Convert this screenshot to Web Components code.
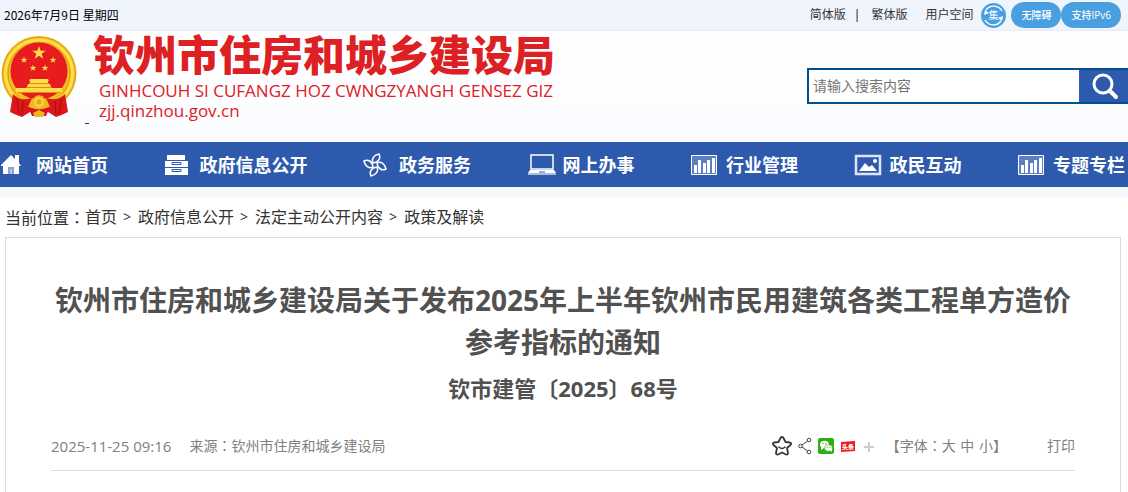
<!DOCTYPE html>
<html lang="zh-CN">
<head>
<meta charset="utf-8">
<title>钦州市住房和城乡建设局</title>
<style>
    body {
        margin: 0;
        min-height: 100vh;
        display: flex;
        flex-direction: column;
        background: #fff;
        color: #333;
        font-family: "Open Sans", "Noto Sans CJK SC", sans-serif;
    }
</style>
</head>
<body>
<top-bar></top-bar>
<site-header></site-header>
<main-nav>
    <nav-item icon="home">网站首页</nav-item>
    <nav-item icon="drawer">政府信息公开</nav-item>
    <nav-item icon="fan">政务服务</nav-item>
    <nav-item icon="laptop">网上办事</nav-item>
    <nav-item icon="chart">行业管理</nav-item>
    <nav-item icon="picture">政民互动</nav-item>
    <nav-item icon="chart">专题专栏</nav-item>
</main-nav>
<crumb-trail></crumb-trail>
<article-panel>
    <span slot="title">钦州市住房和城乡建设局关于发布2025年上半年钦州市民用建筑各类工程单方造价参考指标的通知</span>
    <span slot="number">钦市建管〔2025〕68号</span>
    <article-meta slot="meta"></article-meta>
</article-panel>

<script>
class BaseElement extends HTMLElement {
    connectedCallback() {
        if (this.shadowRoot) return;
        this.root = this.attachShadow({mode: 'open'});
        this.root.innerHTML = this.constructor.template(this);
    }
}

class TopBar extends BaseElement {
    static template() {
        return `
            <style>
                :host {
                    display: flex;
                    align-items: center;
                    justify-content: space-between;
                    height: 30px;
                    padding: 0 7px 0 4px;
                    background: #f0f5fd;
                    border-bottom: 1px solid #e3ecf8;
                    font-size: 12px;
                    line-height: 16px;
                }
                time {
                    font-family: "Noto Sans CJK SC", sans-serif;
                    color: #000;
                }
                nav, .pills { display: flex; align-items: center; }
                a { color: #333; text-decoration: none; }
                .bar { margin: 0 11px 0 8px; color: #000; }
                .space { margin: 0 8px 0 18px; }
                svg { display: block; width: 25px; height: 25px; }
                .pills { margin-left: 5px; }
                .pills a {
                    box-sizing: border-box;
                    height: 26px;
                    padding: 0 10px;
                    border-radius: 13px;
                    background: #4a9fe0;
                    color: #fff;
                    font-size: 10px;
                    font-weight: 500;
                    line-height: 26px;
                }
            </style>
            <time datetime="2026-07-09">2026年7月9日 星期四</time>
            <nav>
                <a href="#">简体版</a>
                <span class="bar">|</span>
                <a href="#">繁体版</a>
                <a class="space" href="#">用户空间</a>
                <a href="#" aria-label="集约化">
                    <svg viewBox="0 0 25 25">
                        <circle cx="12.500" cy="12.500" r="12.500" fill="#4a9fe0"/>
                        <path d="M5 7a9.500 9.500 0 0 1 16 1M20 18A9.500 9.500 0 0 1 4 17" fill="none" stroke="#fff" stroke-width="1.400"/>
                        <path d="M3 12l1-5 4 3zM22 13l-1 5-4-3z" fill="#fff"/>
                        <text x="12.500" y="16" text-anchor="middle" font-size="10" fill="#fff">集</text>
                    </svg>
                </a>
                <div class="pills">
                    <a href="#">无障碍</a>
                    <a href="#">支持IPv6</a>
                </div>
            </nav>
        `;
    }
}

class SiteEmblem extends BaseElement {
    static template() {
        return `
            <style>
                :host { display: block; width: 76px; height: 84px; }
                svg { display: block; }
            </style>
            <svg width="76" height="84" viewBox="0 0 76 84">
                <defs>
                    <path id="star" d="M0-7L1.700-2.200H6.700L2.700.800 4.200 5.700 0 2.800-4.200 5.700-2.700.800-6.700-2.200H-1.700z"/>
                </defs>
                <circle cx="38" cy="38.500" r="37.500" fill="#f2bd22"/>
                <circle cx="38" cy="38.500" r="36.500" fill="none" stroke="#dc9d18"/>
                <circle cx="38" cy="38.500" r="33.500" fill="none" stroke="#ffdf4a" stroke-width="3"/>
                <circle cx="38" cy="38.500" r="31" fill="none" stroke="#dd9b17"/>
                <circle cx="38" cy="36" r="28.500" fill="#e81c1f"/>
                <g fill="#ffdd4a">
                    <use href="#star" transform="translate(38 18)"/>
                    <use href="#star" transform="translate(23 25) scale(.5)"/>
                    <use href="#star" transform="translate(52 25) scale(.5)"/>
                    <use href="#star" transform="translate(32 33) scale(.5)"/>
                    <use href="#star" transform="translate(44 33) scale(.5)"/>
                    <path d="M29 44h18l1 2h-1v3h2l1 3h-24l1-3h2v-3h-1z"/>
                    <path d="M15 53h46v5h-46z"/>
                </g>
                <path d="M28 48.500h20M25 52.500h26M16 57.500h44" stroke="#dc8d14"/>
                <path d="M14 58l10 8h28l10-8-2 8-22 12-22-12z" fill="#f1b925"/>
                <path d="M12 59q7 8 19 4l-4 9 11 3 11-3-4-9q12 4 19-4l3 18q-6 3-12 5l-8-5-9-2-9 2-8 5q-6-2-12-5z" fill="#da171b"/>
                <circle cx="38" cy="67" r="6" fill="#f8d13b" stroke="#edb51f" stroke-width="2" stroke-dasharray="2 1"/>
                <circle cx="38" cy="67" r="2.500" fill="#e7a21c"/>
                <path d="M27 72q11 5 22 0l-4 9h-14z" fill="#d9151a"/>
                <path d="M32 78l6-3 6 3-2 4h-8z" fill="#f0b722"/>
                <path d="M16 64l2 15M22 66l-1 14M60 64l-2 15M54 66l1 14" stroke="#ad0c12"/>
            </svg>
        `;
    }
}

class SearchBox extends BaseElement {
    static template() {
        return `
            <style>
                :host { display: block; width: 321px; }
                form {
                    display: flex;
                    box-sizing: border-box;
                    height: 36px;
                    border: 2px solid #01508f;
                    border-right: 0;
                    background: #fff;
                }
                input {
                    flex: 1;
                    min-width: 0;
                    padding: 0 4px;
                    border: 0;
                    outline: 0;
                    font: 14px/20px "Open Sans", "Noto Sans CJK SC", sans-serif;
                }
                input::placeholder { color: #757575; }
                button {
                    width: 49px;
                    padding: 0 8px 0 12px;
                    border: 0;
                    background: #2e5aae;
                }
                svg { display: block; }
            </style>
            <form>
                <input type="text" aria-label="搜索" placeholder="请输入搜索内容">
                <button type="button" aria-label="搜索">
                    <svg width="29" height="28" viewBox="0 0 29 28" fill="none" stroke="#fff" stroke-linecap="round">
                        <circle cx="12" cy="12" r="9" stroke-width="3"/>
                        <path d="M19 19l6 6" stroke-width="4"/>
                    </svg>
                </button>
            </form>
        `;
    }
}

class SiteHeader extends BaseElement {
    static template() {
        return `
            <style>
                :host {
                    display: flex;
                    justify-content: space-between;
                    height: 111px;
                    background: linear-gradient(#fff, #fbfcff);
                }
                .brand { display: flex; color: #dc2024; }
                site-emblem { margin: 4px 8px 0 1px; }
                .mark {
                    align-self: flex-start;
                    width: 4px;
                    height: 92px;
                    margin-right: 4px;
                    border-bottom: 1px solid #333;
                }
                h1, p { margin: 0; white-space: nowrap; }
                h1 {
                    margin-bottom: 6px;
                    font: 900 42px/44px "Noto Sans CJK SC", sans-serif;
                }
                p {
                    padding-left: 6px;
                    font-size: 17px;
                    font-weight: 500;
                    line-height: 20px;
                }
                search-box { margin-top: 37px; }
            </style>
            <div class="brand">
                <site-emblem></site-emblem>
                <span class="mark"></span>
                <div>
                    <h1>钦州市住房和城乡建设局</h1>
                    <p>GINHCOUH SI CUFANGZ HOZ CWNGZYANGH GENSEZ GIZ</p>
                    <p>zjj.qinzhou.gov.cn</p>
                </div>
            </div>
            <search-box></search-box>
        `;
    }
}

class MainNav extends BaseElement {
    static template() {
        return `
            <style>
                :host { display: block; background: #2e5aae; border-bottom: 10px solid #f5f9fe; }
                nav {
                    display: flex;
                    align-items: center;
                    justify-content: space-between;
                    height: 45px;
                    padding-right: 3px;
                }
            </style>
            <nav><slot></slot></nav>
        `;
    }
}

const NAV_ICONS = {
    home: '<path d="M1 11L11 1l4 4V1h4v8l2 3h-2v8H3v-8H1z" fill="#fff"/><path d="M8 13h6v7H8z" fill="#8ba5d3"/><path d="M10 15h2v5h-2z" fill="#b9c9e5"/>',
    drawer: '<path d="M3 1h18v5H3zM1 7h23v6H1zM1 14h23v7H1z" fill="#fff"/><path d="M8 8.500h9v2H8zM8 15.500h9v2H8z" fill="none" stroke="#2e5aae" stroke-width="1"/>',
    fan: '<g fill="none" stroke="#fff" stroke-width="1.500"><path id="leaf" d="M10 9C8 5 11 1 16 0c2 4 0 8-6 9z"/><use href="#leaf" transform="rotate(90 12 11)"/><use href="#leaf" transform="rotate(180 12 11)"/><use href="#leaf" transform="rotate(270 12 11)"/></g>',
    laptop: '<path d="M4 1h22v14H4z" fill="none" stroke="#fff" stroke-width="1.500"/><path d="M3 16h24l2 3H1z" fill="#fff"/><path d="M1 19h28v2H1z" fill="#a9bddf"/><path d="M12 18h6" stroke="#2e5aae"/>',
    chart: '<path d="M1.500 1.500h25v19h-25z" fill="#5c7fc0" stroke="#fff"/><path d="M4 11h3v8H4zM8 6h3v13H8zM13 9h3v10h-3zM17 6h3v13h-3zM22 4h3v15h-3z" fill="#fff"/>',
    picture: '<path d="M2 2h24v18H2z" fill="none" stroke="#dce5f4" stroke-width="2.500"/><path d="M5 17l6-8 4 4 3-2 5 6z" fill="#fff"/><circle cx="21" cy="7" r="2" fill="#fff"/>'
};

class NavItem extends BaseElement {
    static template(el) {
        return `
            <style>
                :host { display: block; }
                a {
                    display: grid;
                    grid-template-columns: 36px auto;
                    align-items: center;
                    color: #fff;
                    font-size: 18px;
                    font-weight: 700;
                    line-height: 24px;
                    text-decoration: none;
                    white-space: nowrap;
                }
                svg { display: block; overflow: visible; }
            </style>
            <a href="#">
                <svg width="30" height="22" viewBox="0 0 30 22">${NAV_ICONS[el.getAttribute('icon')]}</svg>
                <span><slot></slot></span>
            </a>
        `;
    }
}

class CrumbTrail extends BaseElement {
    static template() {
        return `
            <style>
                :host {
                    display: flex;
                    height: 40px;
                    padding-left: 5px;
                    font-size: 16px;
                    line-height: 40px;
                }
                a { color: #333; text-decoration: none; }
                .colon { font-family: "Noto Sans CJK TC", sans-serif; }
                i { margin: 0 7px 0 6px; font-size: 14px; font-style: normal; }
            </style>
            <span>当前位置<span class="colon" lang="zh-TW">：</span></span>
            <a href="#">首页</a><i>&gt;</i>
            <a href="#">政府信息公开</a><i>&gt;</i>
            <a href="#">法定主动公开内容</a><i>&gt;</i>
            <a href="#">政策及解读</a>
        `;
    }
}

class ArticlePanel extends BaseElement {
    static template() {
        return `
            <style>
                :host {
                    display: block;
                    flex: 1;
                    margin: 0 7px 0 5px;
                    padding: 41px 45px 0;
                    border: 1px solid #dcdcdc;
                    border-bottom: 0;
                    color: #505150;
                    text-align: center;
                }
                h2, h3 { margin: 0; font-weight: 700; line-height: 42px; }
                h2 { font-size: 28px; }
                h3 { margin: 4px 0 24px; font-size: 22px; }
            </style>
            <h2><slot name="title"></slot></h2>
            <h3><slot name="number"></slot></h3>
            <slot name="meta"></slot>
        `;
    }
}

class ArticleMeta extends BaseElement {
    static template() {
        return `
            <style>
                :host {
                    display: flex;
                    align-items: center;
                    justify-content: space-between;
                    padding-bottom: 12px;
                    border-bottom: 1px solid #dcdcdc;
                    color: #808080;
                    font-size: 14px;
                    line-height: 24px;
                }
                div { display: flex; align-items: center; }
                time { margin-right: 18px; font-size: 15px; }
                a { color: inherit; text-decoration: none; }
                svg { display: block; }
                .colon { font-family: "Noto Sans CJK TC", sans-serif; }
                .share { gap: 6px; margin-right: 11px; }
                .size a + a { margin-left: 1px; }
                .print { margin-left: 40px; }
            </style>
            <div>
                <time datetime="2025-11-25T09:16">2025-11-25 09:16</time>
                <span>来源<span class="colon" lang="zh-TW">：</span>钦州市住房和城乡建设局</span>
            </div>
            <div>
                <div class="share">
                    <a href="#" aria-label="收藏">
                        <svg width="20" height="20" viewBox="0 0 20 20" fill="none" stroke="#333740" stroke-width="1.800" stroke-linejoin="round" stroke-linecap="round">
                            <path d="M8.500 2q1.500-2 3 0l2 4 4.500.500q2 .500.500 2.500l-3.500 3 1 5q0 2-2 1.500l-4-2-4 2q-2 .500-2-1.500l1-5-3.500-3q-1.500-2 .500-2.500l4.500-.500z"/>
                            <path d="M7 11q3 3 6 0" stroke-width="1.500"/>
                        </svg>
                    </a>
                    <a href="#" aria-label="分享">
                        <svg width="14" height="18" viewBox="0 0 14 18" fill="none" stroke="#444">
                            <circle cx="2.500" cy="9" r="1.800"/><circle cx="11" cy="3" r="1.800"/><circle cx="11" cy="15" r="1.800"/>
                            <path d="M4 8l5.500-4M4 10l5.500 4"/>
                        </svg>
                    </a>
                    <a href="#" aria-label="微信">
                        <svg width="16" height="16" viewBox="0 0 16 16">
                            <rect width="16" height="16" rx="2" fill="#2fae0f"/>
                            <ellipse cx="6.500" cy="6.500" rx="4.500" ry="3.800" fill="#fff"/><path d="M3 8v4l3-2z" fill="#fff"/>
                            <ellipse cx="10.500" cy="10" rx="4" ry="3.300" fill="#fff" stroke="#2fae0f" stroke-width=".6"/>
                            <path d="M12 12l2 2v-3z" fill="#fff"/>
                            <g fill="#2fae0f"><circle cx="5" cy="5.500" r=".7"/><circle cx="8" cy="5.500" r=".7"/><circle cx="9.200" cy="9.500" r=".6"/><circle cx="12" cy="9.500" r=".6"/></g>
                        </svg>
                    </a>
                    <a href="#" aria-label="今日头条">
                        <svg width="16" height="16" viewBox="0 0 16 16">
                            <path d="M1 4l14-1v10l-14 1z" fill="#ed1c1c"/>
                            <text x="8" y="11" text-anchor="middle" font-size="6" font-weight="900" fill="#fff">头条</text>
                        </svg>
                    </a>
                    <a href="#" aria-label="更多">
                        <svg width="13" height="16" viewBox="0 0 13 16"><path d="M2 9h10M7 4v10" stroke="#ccc" stroke-width="2"/></svg>
                    </a>
                </div>
                <span class="size">【字体<span class="colon" lang="zh-TW">：</span><a href="#">大</a> <a href="#">中</a> <a href="#">小</a>】</span>
                <a class="print" href="#">打印</a>
            </div>
        `;
    }
}

customElements.define('top-bar', TopBar);
customElements.define('site-emblem', SiteEmblem);
customElements.define('search-box', SearchBox);
customElements.define('site-header', SiteHeader);
customElements.define('main-nav', MainNav);
customElements.define('nav-item', NavItem);
customElements.define('crumb-trail', CrumbTrail);
customElements.define('article-panel', ArticlePanel);
customElements.define('article-meta', ArticleMeta);
</script>
</body>
</html>
